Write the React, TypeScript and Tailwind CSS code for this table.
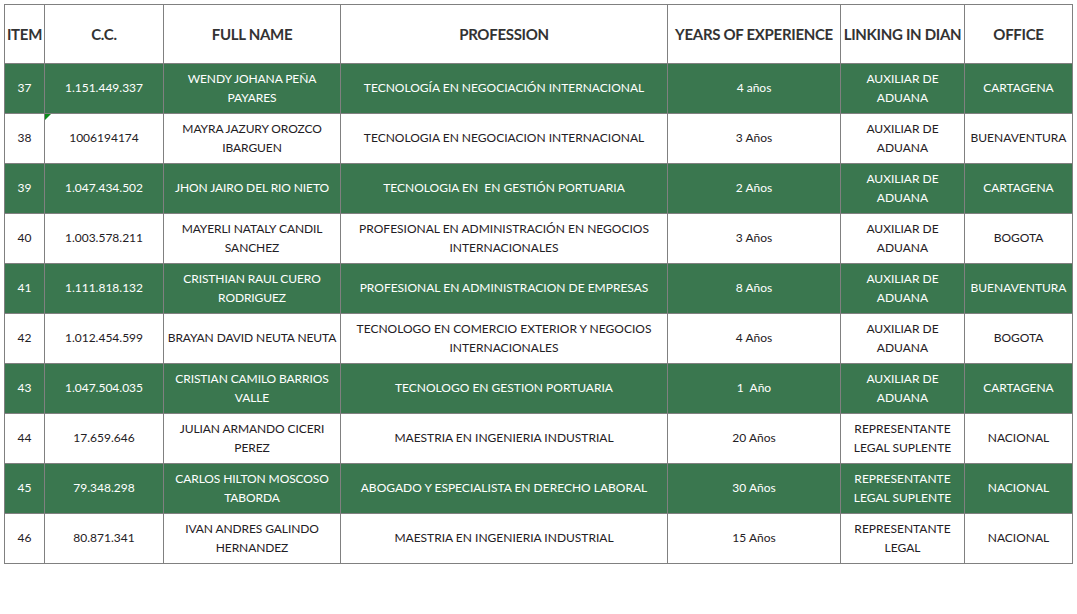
const rows = [
  { item: '37', cc: '1.151.449.337', name: 'WENDY JOHANA PEÑA PAYARES', prof: 'TECNOLOGÍA EN NEGOCIACIÓN INTERNACIONAL', years: '4 años', link: 'AUXILIAR DE ADUANA', office: 'CARTAGENA' },
  { item: '38', cc: '1006194174', name: 'MAYRA JAZURY OROZCO IBARGUEN', prof: 'TECNOLOGIA EN NEGOCIACION INTERNACIONAL', years: '3 Años', link: 'AUXILIAR DE ADUANA', office: 'BUENAVENTURA', note: true },
  { item: '39', cc: '1.047.434.502', name: 'JHON JAIRO DEL RIO NIETO', prof: 'TECNOLOGIA EN  EN GESTIÓN PORTUARIA', years: '2 Años', link: 'AUXILIAR DE ADUANA', office: 'CARTAGENA' },
  { item: '40', cc: '1.003.578.211', name: 'MAYERLI NATALY CANDIL SANCHEZ', prof: 'PROFESIONAL EN ADMINISTRACIÓN EN NEGOCIOS INTERNACIONALES', years: '3 Años', link: 'AUXILIAR DE ADUANA', office: 'BOGOTA' },
  { item: '41', cc: '1.111.818.132', name: 'CRISTHIAN RAUL CUERO RODRIGUEZ', prof: 'PROFESIONAL EN ADMINISTRACION DE EMPRESAS', years: '8 Años', link: 'AUXILIAR DE ADUANA', office: 'BUENAVENTURA' },
  { item: '42', cc: '1.012.454.599', name: 'BRAYAN DAVID NEUTA NEUTA', prof: 'TECNOLOGO EN COMERCIO EXTERIOR Y NEGOCIOS INTERNACIONALES', years: '4 Años', link: 'AUXILIAR DE ADUANA', office: 'BOGOTA' },
  { item: '43', cc: '1.047.504.035', name: 'CRISTIAN CAMILO BARRIOS VALLE', prof: 'TECNOLOGO EN GESTION PORTUARIA', years: '1  Año', link: 'AUXILIAR DE ADUANA', office: 'CARTAGENA' },
  { item: '44', cc: '17.659.646', name: 'JULIAN ARMANDO CICERI PEREZ', prof: 'MAESTRIA EN INGENIERIA INDUSTRIAL', years: '20 Años', link: 'REPRESENTANTE LEGAL SUPLENTE', office: 'NACIONAL' },
  { item: '45', cc: '79.348.298', name: 'CARLOS HILTON MOSCOSO TABORDA', prof: 'ABOGADO Y ESPECIALISTA EN DERECHO LABORAL', years: '30 Años', link: 'REPRESENTANTE LEGAL SUPLENTE', office: 'NACIONAL' },
  { item: '46', cc: '80.871.341', name: 'IVAN ANDRES GALINDO HERNANDEZ', prof: 'MAESTRIA EN INGENIERIA INDUSTRIAL', years: '15 Años', link: 'REPRESENTANTE LEGAL', office: 'NACIONAL' },
]

const headers = ['ITEM', 'C.C.', 'FULL NAME', 'PROFESSION', 'YEARS OF EXPERIENCE', 'LINKING IN DIAN', 'OFFICE']
const widths = ['w-[40px]', 'w-[119px]', 'w-[177px]', 'w-[327px]', 'w-[173px]', 'w-[124px]', 'w-[108px]']

export default function App() {
  return (
    <div className="w-[1077px] h-[614px] bg-white pl-[4px] pt-[4px] font-['Lato',sans-serif]">
      <table className="table-fixed border-collapse w-[1069px]">
        <colgroup>
          {widths.map((w, i) => (
            <col key={i} className={w} />
          ))}
        </colgroup>
        <thead>
          <tr className="h-[59px]">
            {headers.map((h) => (
              <th
                key={h}
                className="border border-[#808080] text-[15px] font-bold text-[#333333] text-center whitespace-nowrap tracking-[-0.3px] p-0"
              >
                {h}
              </th>
            ))}
          </tr>
        </thead>
        <tbody>
          {rows.map((r, i) => {
            const green = i % 2 === 0
            const cell = `border border-[#808080] text-center text-[12px] leading-[19px] px-[1px] pb-[2px] ${
              green ? 'bg-[#3a774f] text-white' : 'bg-white text-[#1f2024]'
            }`
            return (
              <tr key={r.item} className="h-[50px]">
                <td className={cell}>{r.item}</td>
                <td className={`${cell} relative`}>
                  {r.note && (
                    <span className="absolute left-0 top-0 w-0 h-0 border-t-[6px] border-t-[#0a8a1a] border-r-[6px] border-r-transparent" />
                  )}
                  {r.cc}
                </td>
                <td className={`${cell} tracking-[-0.1px]`}>{r.name}</td>
                <td className={`${cell} whitespace-pre-wrap`}>{r.prof}</td>
                <td className={`${cell} whitespace-pre`}>{r.years}</td>
                <td className={cell}>{r.link}</td>
                <td className={cell}>{r.office}</td>
              </tr>
            )
          })}
        </tbody>
      </table>
    </div>
  )
}
